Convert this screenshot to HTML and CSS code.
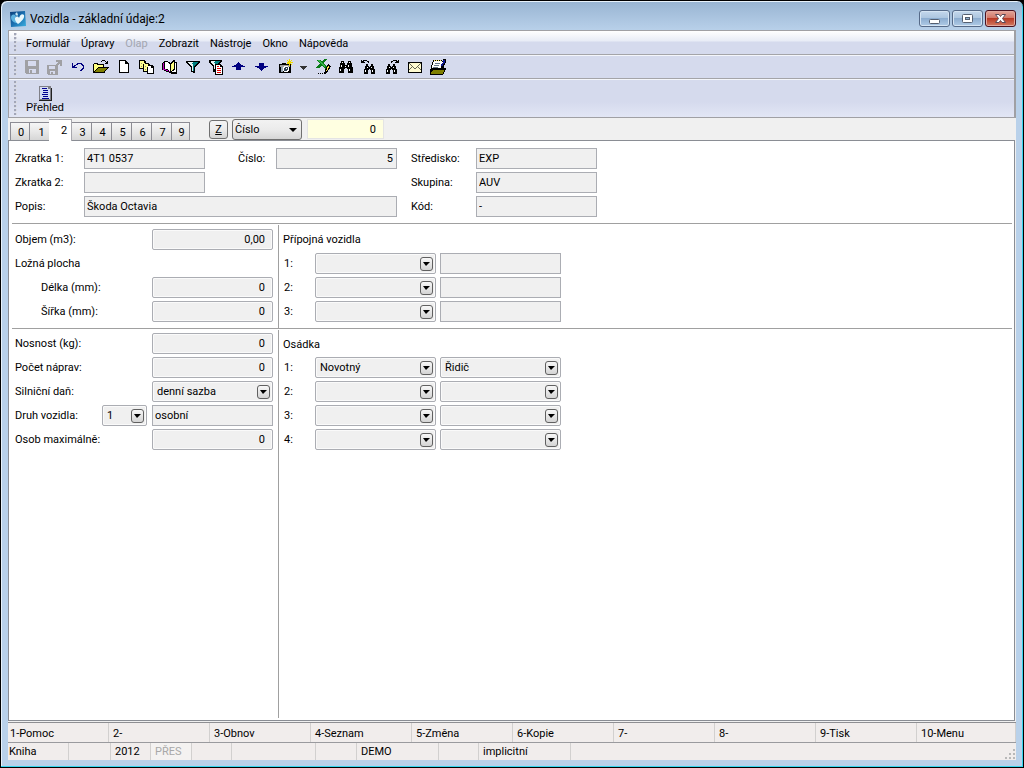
FILE: index.html
```
<!DOCTYPE html>
<html lang="cs">
<head>
<meta charset="utf-8">
<title>Vozidla - základní údaje:2</title>
<link rel="stylesheet" href="styles.css">
</head>
<body>
<div class="window">
  <header class="titlebar">
    <svg class="logo" viewBox="0 0 16 16"><defs><linearGradient id="lg" x1="0" y1="0" x2="1" y2="1"><stop offset="0" stop-color="#0b3d78"/><stop offset="0.500" stop-color="#1a6fb0"/><stop offset="1" stop-color="#3bb0e0"/></linearGradient></defs><path d="M0 1L15 0L16 15L1 16Z" fill="url(#lg)"/><path d="M1 6C2 3 4 3 6 5C5 7 6 10 8 12C4 12 1 10 1 6Z" fill="#5fb4e0"/><path d="M8 13C5 10 4 7 6 6C7 5 9 6 9 7C10 4 12 2 14 4C15 7 11 11 8 13Z" fill="#e9f8fd"/><path d="M5 3L7 1L8 4L7 5Z" fill="#c8e6f4"/></svg>
    <h1 class="title">Vozidla - základní údaje:2</h1>
    <div class="winbtns">
      <button class="winbtn" aria-label="Minimalizovat"><svg width="13" height="11" viewBox="0 0 13 11"><rect x="1.500" y="6.500" width="10" height="4" rx="1" fill="#fff" stroke="#555f70"/></svg></button>
      <button class="winbtn" aria-label="Maximalizovat"><svg width="13" height="11" viewBox="0 0 13 11"><rect x="1.500" y="1.500" width="10" height="8" rx="1" fill="#fff" stroke="#555f70"/><rect x="4.500" y="4.500" width="4" height="2" fill="#8fb0d0" stroke="#555f70"/></svg></button>
      <button class="winbtn close" aria-label="Zavřít"><svg width="13" height="11" viewBox="0 0 13 11"><path d="M1.500 1.500H5L6.500 3.500L8 1.500H11.500L8.500 5.500L11.500 9.500H8L6.500 7.500L5 9.500H1.500L4.500 5.500Z" fill="#fff" stroke="#5a4a58"/></svg></button>
    </div>
  </header>

  <div class="client">
    <div class="bars">
      <nav class="bar menubar">
        <span class="grip"></span>
        <button>Formulář</button><button>Úpravy</button><button disabled>Olap</button><button>Zobrazit</button><button>Nástroje</button><button>Okno</button><button>Nápověda</button>
      </nav>
      <div class="bar toolbar">
        <span class="grip"></span>
        <button aria-label="Uložit"><svg viewBox="0 0 16 16"><path d="M1 1H15V15H2L1 14Z" fill="#a0a0a4"/><path d="M4 2H12V7H4Z" fill="#d6daee"/><path d="M5 10H12V14H5Z" fill="#d6daee"/><path d="M6 11H8V14H6Z" fill="#a0a0a4"/></svg></button>
        <button aria-label="Uložit jako"><svg viewBox="0 0 16 16"><path d="M0 6H11V16H1L0 15Z" fill="#a0a0a4"/><path d="M2 7H8V10H2ZM3 12H8V15H3Z" fill="#d6daee"/><path d="M4 13H6V15H4ZM9 1H15V7H13V5H12V6H11V7H9V5H10V4H11V3H9Z" fill="#a0a0a4"/></svg></button>
        <button aria-label="Zpět"><svg viewBox="0 0 16 16"><path d="M2 4H3V7H4V6H6V5H7V4H12V5H13V6H14V10H13V11H12V12H10V11H11V10H12V9H13V7H12V6H11V5H8V6H6V7H5V8H7V9H2Z" fill="#000080"/></svg></button>
        <button aria-label="Otevřít"><svg viewBox="0 0 16 16"><path d="M0 5H1V4H5V5H11V8H16V9H15V10H14V11H13V12H12V14H0Z"/><path d="M1 5H4V6H10V8H5V9H4V10H3V11H2V12H1Z" fill="#ffff80"/><path d="M5 9H14V10H13V11H12V12H11V13H2V12H3V11H4V10H5Z" fill="#808000"/><path d="M8 2H9V1H12V2H13V3H14V2H15V5H12V4H13V3H12V2H9V3H8Z"/></svg></button>
        <button aria-label="Nový"><svg viewBox="0 0 16 16"><path d="M3 1H10V2H11V3H12V4H13V14H3Z"/><path d="M4 2H9V5H12V13H4Z" fill="#fff"/></svg></button>
        <button aria-label="Kopie"><svg viewBox="0 0 16 16"><path d="M0 1H6V2H7V4H10V5H11V6H14V7H15V15H8V13H4V10H0Z"/><path d="M1 2H5V4H6V5H4V9H1Z" fill="#ffff90"/><path d="M5 5H9V7H10V8H8V12H5Z" fill="#ffff90"/><path d="M9 7H12V9H14V14H9Z" fill="#fff"/><path d="M2 4H3V5H2ZM2 7H3V8H2ZM6 7H7V8H6ZM6 10H7V11H6Z" fill="#999977"/></svg></button>
        <button aria-label="Kniha"><svg viewBox="0 0 16 16"><path d="M0 4H1V3H2V2H6V3H8V4H9V3H10V2H11V1H13V3H15V15H9V14H7V13H4V12H2V11H0Z"/><path d="M1 4H2V10H4V11H6V12H8V13H7V12H4V11H1Z" fill="#c000c0"/><path d="M3 3H6V4H7V5H8V12H7V11H6V10H3Z" fill="#fff"/><path d="M9 5H10V4H11V3H12V10H11V11H10V12H9Z" fill="#ffff80"/><path d="M13 4H14V13H10V12H12V11H13Z" fill="#fff"/></svg></button>
        <button aria-label="Filtr"><svg viewBox="0 0 16 16"><path d="M1 2H15V4H14V5H13V6H12V7H11V8H10V14H8V13H6V8H5V7H4V6H3V5H2V4H1Z"/><path d="M3 3H13V4H12V5H11V6H10V7H9V12H7V7H6V6H5V5H4V4H3Z" fill="#008080"/><path d="M3 3H8V4H7V5H8V12H7V7H6V6H5V5H4V4H3Z" fill="#e8f4f4"/></svg></button>
        <button aria-label="Filtr seznamu"><svg viewBox="0 0 16 16"><path d="M1 1H14V3H13V4H12V5H11V6H10V13H5V7H4V6H3V5H2V4H1Z"/><path d="M3 2H12V3H11V4H10V5H9V6H8V10H6V6H5V5H4V4H3Z" fill="#008080"/><path d="M3 2H7V3H6V4H7V10H6V6H5V5H4V4H3Z" fill="#e8f4f4"/><path d="M7 5H13V6H14V7H15V16H7Z"/><path d="M8 6H12V8H14V15H8Z" fill="#fff"/><path d="M9 7H11V8H9ZM9 9H13V10H9ZM9 11H13V12H9ZM9 13H13V14H9Z" fill="#e00000"/></svg></button>
        <button aria-label="Předchozí"><svg viewBox="0 0 16 16"><path d="M7 3H8V4H9V5H10V6H12V7H14V8H10V11H5V8H1V7H3V6H5V5H6V4H7Z" fill="#000080"/></svg></button>
        <button aria-label="Další"><svg viewBox="0 0 16 16"><path d="M5 4H10V7H14V8H12V9H10V10H9V11H8V12H7V11H6V10H5V9H3V8H1V7H5Z" fill="#000080"/></svg></button>
        <button aria-label="Snímek"><svg viewBox="0 0 16 16"><path d="M2 5H5V4H9V5H14V14H2Z"/><path d="M3 6H13V8H3Z" fill="#a0a0a0"/><path d="M4 8H6V13H4Z" fill="#98a8b8"/><circle cx="9" cy="10" r="3" fill="#fff"/><circle cx="9" cy="10" r="2" fill="#334455"/><path d="M9 9H10V10H9Z" fill="#fff"/><path d="M9 3H11V2H10V1H11V2H12V0H13V2H14V1H15V2H14V3H16V4H14V5H15V6H14V5H13V7H12V5H10V4H11Z" fill="#f2dc00"/></svg></button>
        <button class="drop" aria-label="Možnosti snímku"><svg viewBox="0 0 16 16"><path d="M4 7H11V8H10V9H9V10H8V11H7V10H6V9H5V8H4Z" fill="#333"/></svg></button>
        <button aria-label="Export do Excelu"><svg viewBox="0 0 16 16"><path d="M1 1H5L7 3L9 0H12L9 4L12 8L10 10L7 7L4 9H1L5 4Z" fill="#087a18"/><path d="M2 1H5L10 7V8H9Z" fill="#35b54a"/><path d="M13 5L16 7L12 14L9 15L10 11Z"/><path d="M13 7L14 8L12 12L11 12Z" fill="#ffe34a"/><path d="M3 14H4V15H3ZM5 14H6V15H5ZM7 14H8V15H7Z"/></svg></button>
        <button aria-label="Hledat"><svg viewBox="0 0 16 16"><path d="M3 2H6V4H7V6H9V4H10V2H13V4H14V8H15V14H10V10H9V9H7V10H6V14H1V8H2V4H3Z"/><path d="M4 3H5V4H4ZM3 6H4V8H3ZM2 10H3V12H2ZM11 3H12V4H11ZM10 6H11V8H10ZM11 10H12V12H11ZM7 7H8V8H7Z" fill="#fff"/></svg></button>
        <button aria-label="Hledat předchozí"><svg viewBox="0 0 16 16"><path d="M5 5H7V7H8V8H9V7H10V5H12V7H13V10H14V15H10V11H9V10H8V11H7V15H3V10H4V7H5Z"/><path d="M4 11H5V13H4ZM11 11H12V13H11ZM6 8H7V9H6ZM10 8H11V9H10Z" fill="#fff"/><path d="M0 1H1V2H2V1H6V2H8V4H7V3H6V2H3V3H4V4H0Z"/></svg></button>
        <button aria-label="Hledat další"><svg viewBox="0 0 16 16"><path d="M4 5H6V7H7V8H8V7H9V5H11V7H12V10H13V15H9V11H8V10H7V11H6V15H2V10H3V7H4Z"/><path d="M3 11H4V13H3ZM10 11H11V13H10ZM5 8H6V9H5ZM9 8H10V9H9Z" fill="#fff"/><path d="M15 1H14V2H13V1H9V2H7V4H8V3H9V2H12V3H11V4H15Z"/></svg></button>
        <button aria-label="E-mail"><svg viewBox="0 0 16 16"><path d="M1 3H15V14H1Z"/><path d="M2 4H14V13H2Z" fill="#fffbd0"/><path d="M2 4H3V5H4V6H5V7H6V8H7V9H9V8H10V7H11V6H12V5H13V4H14V5H13V6H12V7H11V8H12V9H13V10H14V11H13V10H12V9H11V8H10V9H9V10H7V9H6V8H5V9H4V10H3V11H2V10H3V9H4V8H5V7H4V6H3V5H2Z" fill="#666655"/></svg></button>
        <button aria-label="Poznámky"><svg viewBox="0 0 16 16"><path d="M3 1H12V2H13V0H16V4H15V6H14V9H16V11H15V13H14V15H13V16H0V10H1V6H2V3H3Z"/><path d="M4 2H12V3H13V4H12V6H11V9H2V6H3V3H4Z" fill="#fff"/><path d="M5 4H10V5H5ZM4 6H9V7H4ZM3 8H8V9H3Z" fill="#667788"/><path d="M4 1H5V2H4ZM6 1H7V2H6ZM8 1H9V2H8ZM10 1H11V2H10Z" fill="#ffe860"/><path d="M13 1H15V4H14V5H13V7H11V5H12V4H13Z" fill="#101890"/><path d="M3 11H14V13H13V15H1V13H2V12H3Z" fill="#808000"/></svg></button>
      </div>
      <div class="bar overview">
        <span class="grip"></span>
        <button><svg viewBox="0 0 16 16"><path d="M2 1H14V15H2Z" fill="#808088"/><path d="M3 2H11V4H13V14H3Z" fill="#d4dcf4"/><path d="M2 15H14V16H2ZM14 3H15V16H14Z" fill="#222"/><path d="M5 3H10V4H5ZM6 5H11V6H6ZM6 7H11V8H6ZM5 9H11V10H5ZM6 11H11V12H6ZM5 13H12V14H5Z" fill="#000090"/></svg><span>Přehled</span></button>
      </div>
    </div>

    <div class="tabstrip">
      <div class="tabs" role="tablist">
        <button role="tab">0</button><button role="tab">1</button><button role="tab" class="active" aria-selected="true">2</button><button role="tab">3</button><button role="tab">4</button><button role="tab">5</button><button role="tab">6</button><button role="tab">7</button><button role="tab">9</button>
      </div>
      <button class="zbtn"><u>Z</u></button>
      <span class="finder"><select aria-label="Hledat podle"><option>Číslo</option></select></span>
      <input class="search" aria-label="Hledaná hodnota" value="0">
    </div>

    <main class="page">
      <section class="ident">
        <label for="z1">Zkratka 1:</label><input id="z1" value="4T1 0537" readonly>
        <label class="mid" for="cis">Číslo:</label><input id="cis" class="num" value="5" readonly>
        <label for="str">Středisko:</label><input id="str" value="EXP" readonly>
        <label for="z2">Zkratka 2:</label><input id="z2" readonly>
        <label class="third" for="sku">Skupina:</label><input id="sku" value="AUV" readonly>
        <label for="pop">Popis:</label><input id="pop" class="wide" value="Škoda Octavia" readonly>
        <label for="kod">Kód:</label><input id="kod" value="-" readonly>
      </section>

      <div class="split">
        <section class="left">
          <div class="row"><label for="obj">Objem (m3):</label><input id="obj" class="num soft" value="0,00"></div>
          <div class="row"><span>Ložná plocha</span></div>
          <div class="row"><label class="sub" for="del">Délka (mm):</label><input id="del" class="num soft" value="0"></div>
          <div class="row"><label class="sub" for="sir">Šířka (mm):</label><input id="sir" class="num soft" value="0"></div>
        </section>
        <section class="right">
          <h2>Přípojná vozidla</h2>
          <div class="row"><label for="p1">1:</label><span class="combo"><select id="p1"><option></option></select></span><input aria-label="Vozidlo 1" readonly></div>
          <div class="row"><label for="p2">2:</label><span class="combo"><select id="p2"><option></option></select></span><input aria-label="Vozidlo 2" readonly></div>
          <div class="row"><label for="p3">3:</label><span class="combo"><select id="p3"><option></option></select></span><input aria-label="Vozidlo 3" readonly></div>
        </section>
      </div>

      <div class="split last">
        <section class="left">
          <div class="row"><label for="nos">Nosnost (kg):</label><input id="nos" class="num soft" value="0"></div>
          <div class="row"><label for="nap">Počet náprav:</label><input id="nap" class="num soft" value="0"></div>
          <div class="row"><label for="dan">Silniční daň:</label><span class="combo"><select id="dan"><option>denní sazba</option></select></span></div>
          <div class="row"><label for="dru">Druh vozidla:</label><span class="combo small"><select id="dru"><option>1</option></select></span><input aria-label="Název druhu" value="osobní" readonly></div>
          <div class="row"><label for="oso">Osob maximálně:</label><input id="oso" class="num soft" value="0"></div>
        </section>
        <section class="right">
          <h2>Osádka</h2>
          <div class="row"><label for="o1">1:</label><span class="combo"><select id="o1"><option>Novotný</option></select></span><span class="combo"><select aria-label="Funkce 1"><option>Řidič</option></select></span></div>
          <div class="row"><label for="o2">2:</label><span class="combo"><select id="o2"><option></option></select></span><span class="combo"><select aria-label="Funkce 2"><option></option></select></span></div>
          <div class="row"><label for="o3">3:</label><span class="combo"><select id="o3"><option></option></select></span><span class="combo"><select aria-label="Funkce 3"><option></option></select></span></div>
          <div class="row"><label for="o4">4:</label><span class="combo"><select id="o4"><option></option></select></span><span class="combo"><select aria-label="Funkce 4"><option></option></select></span></div>
        </section>
      </div>
    </main>

    <div class="keys">
      <button>1-Pomoc</button><button>2-</button><button>3-Obnov</button><button>4-Seznam</button><button>5-Změna</button><button>6-Kopie</button><button>7-</button><button>8-</button><button>9-Tisk</button><button>10-Menu</button>
    </div>
    <footer class="status">
      <span>Kniha</span><span></span><span>2012</span><span class="off">PŘES</span><span></span><span></span><span></span><span>DEMO</span><span></span><span>implicitní</span><span class="end"><svg width="11" height="11" viewBox="0 0 11 11"><path d="M8 0H10V2H8ZM8 4H10V6H8ZM4 4H6V6H4ZM8 8H10V10H8ZM4 8H6V10H4ZM0 8H2V10H0Z" fill="#b8b8b8"/></svg></span>
    </footer>
  </div>
</div>
</body>
</html>
```
FILE: styles.css
```
*, *::before, *::after { box-sizing: border-box; }
body {
  margin: 0;
  font: 11px/14px Roboto, "DejaVu Sans Condensed", sans-serif;
  color: #000;
  background: #000;
}
button, input, select { font: inherit; color: inherit; margin: 0; padding: 0; border-radius: 0; }
button { background: none; border: 0; }
h1, h2 { margin: 0; font: inherit; }
svg { display: block; shape-rendering: crispEdges; }

.window {
  min-height: 100vh;
  display: flex;
  flex-direction: column;
  padding: 0 6px 7px;
  border: 1px solid #000;
  border-radius: 7px 7px 0 0;
  background: linear-gradient(#98b4d2, #b9d1ea 30px, #b9d1ea);
  box-shadow: inset -1px -1px #35d5ee, inset 1px 1px #e8f2fb;
}

.titlebar {
  height: 29px;
  display: flex;
  align-items: center;
  padding: 6px 1px 0 3px;
  gap: 4px;
}
.logo { width: 16px; height: 16px; shape-rendering: auto; }
.title { flex: 1; font-size: 12px; line-height: 16px; }
.winbtns { display: flex; gap: 2px; }
.winbtn {
  width: 31px;
  height: 17px;
  display: flex;
  align-items: center;
  justify-content: center;
  border: 1px solid #566a88;
  border-radius: 3px;
  background: linear-gradient(#c5d8ec, #adc6e0 45%, #8dadd0 50%, #b0cbe6);
  box-shadow: inset 0 0 0 1px #d5e4f3;
}
.winbtn svg { shape-rendering: auto; }
.winbtn.close {
  border-color: #4b1220;
  background: linear-gradient(#e3a599, #d3796a 45%, #b93a26 50%, #d37b62);
  box-shadow: inset 0 0 0 1px #e2a99f;
}

.client {
  flex: 1;
  display: flex;
  flex-direction: column;
  background: #f0f0f0;
  margin: 0 1px;
}

.bars { border: 1px solid #a0a0a4; border-right-width: 2px; background: #d5daed; }
.bar { display: flex; align-items: center; padding-left: 5px; border-bottom: 1px solid #a4a4a8; }
.grip {
  width: 3px;
  align-self: stretch;
  margin: 2px 0;
  background: radial-gradient(circle at 1px 1px, #a2a6b8 1px, #fff 2px, transparent 2px) 0 0 / 3px 4px;
}
.menubar { height: 24px; background: linear-gradient(#fff, #e8ecf6 10px, #d5daed 11px); }
.menubar button { margin-left: 11px; padding-top: 3px; }
.menubar .grip + button { margin-left: 9px; }
.menubar button:disabled { color: #a3a6b0; }
.toolbar { height: 24px; box-shadow: inset 0 1px #f4f6fb; }
.toolbar button { width: 23px; height: 22px; padding: 0 3px 0 4px; }
.toolbar .grip + button { margin-left: 3px; }
.toolbar svg { width: 16px; height: 16px; }
.toolbar .drop { width: 15px; padding: 0; }
.overview {
  height: 38px;
  border-bottom: 0;
  background: linear-gradient(#d5daed 60%, #e2e6f5);
  box-shadow: inset 0 1px #f4f6fb;
}
.overview button {
  display: flex;
  flex-direction: column;
  align-items: center;
  margin: 2px 0 0 9px;
  font: 11px/12px "Liberation Sans", Arial, sans-serif;
}
.overview svg { width: 16px; height: 16px; }

.tabstrip { height: 22px; display: flex; align-items: flex-start; padding: 1px 0 0 2px; background: #f0f0f0; }
.tabs { display: flex; align-items: flex-end; width: 199px; height: 21px; }
.tabs button {
  width: 20px;
  height: 18px;
  padding: 2px 0 0 2px;
  border: 1px solid #8c8c94;
  border-width: 1px 1px 0 0;
  background: linear-gradient(#f6f6f6, #e8e8e8 50%, #d6d6d6);
}
.tabs button:first-child { border-left-width: 1px; }
.tabs button:nth-child(2) { width: 19px; border-right: 0; padding-left: 4px; }
.tabs button:last-child { width: 18px; }
.tabs .active {
  width: 23px;
  height: 22px;
  margin-bottom: -1px;
  padding: 0 0 0 8px;
  background: #fff;
  border-color: #a8a8ae;
  z-index: 1;
}
.zbtn {
  width: 19px;
  height: 19px;
  margin: 1px 4px 0 0;
  border: 1px solid #707070;
  border-radius: 3px;
  background: linear-gradient(#f4f4f4, #ebebeb 50%, #d4d4d4);
}
.finder { position: relative; width: 70px; height: 21px; margin-right: 5px; }
.finder select {
  appearance: none;
  width: 100%;
  height: 100%;
  padding-left: 2px;
  border: 1px solid #707070;
  border-radius: 3px;
  background: linear-gradient(#f2f2f2, #ebebeb 50%, #d6d6d6);
}
.finder::after {
  content: "";
  position: absolute;
  right: 5px;
  top: 9px;
  border: 4px solid transparent;
  border-top-color: #000;
  border-bottom: 0;
  pointer-events: none;
}
.search {
  width: 77px;
  height: 20px;
  padding: 0 7px;
  text-align: right;
  border: 1px solid #e4e4e4;
  background: #ffffe1;
}

.page {
  flex: 1;
  display: flex;
  flex-direction: column;
  padding: 0 2px 2px 3px;
  border: 1px solid #8a8d94;
  margin-right: 1px;
  background: #fff;
}
.page input {
  width: 121px;
  height: 21px;
  padding: 0 2px;
  border: 1px solid #abadb3;
  background: #f0f0f0;
}
.page .num { text-align: right; padding-right: 3px; }
.page .soft { border-radius: 2px; padding-right: 7px; box-shadow: inset 0 0 0 1px #fafafa; }
.ident {
  display: grid;
  grid-template-columns: 69px 121px 71px 121px 79px 121px;
  row-gap: 3px;
  align-items: center;
  padding: 7px 0 6px 3px;
  border-bottom: 1px solid #a0a0a0;
}
.ident .mid { padding-left: 33px; }
.ident #cis + label, .ident .third, .ident #pop + label { padding-left: 14px; }
.ident .third { grid-column: 5; }
.ident .wide { grid-column: 2 / 5; width: 100%; }

.split { display: flex; padding-top: 1px; border-bottom: 1px solid #a0a0a0; }
.split.last { flex: 1; border-bottom: 0; }
.left { width: 267px; padding: 4px 5px 6px 3px; border-right: 1px solid #a0a0a0; }
.right { padding: 4px 0 6px 4px; }
.split.last .left, .split.last .right { padding-top: 3px; }
.row { display: flex; align-items: center; height: 21px; }
.row + .row, h2 + .row { margin-top: 3px; }
.row > label, .row > span:only-child { flex: 1; }
.row .sub { padding-left: 26px; }
.right h2 { height: 21px; line-height: 21px; }
.split.last h2 { line-height: 23px; }
.right .row > label { flex: none; width: 32px; padding-left: 1px; }
.right .row > label + * { margin-right: 4px; }

.combo { position: relative; width: 121px; height: 21px; }
.combo.small { width: 45px; margin-right: 5px; }
.combo select {
  appearance: none;
  width: 100%;
  height: 100%;
  padding: 0 20px 0 4px;
  border: 1px solid #abadb3;
  border-radius: 2px;
  background: #f0f0f0;
  box-shadow: inset 0 0 0 1px #fafafa;
}
.combo::before {
  content: "";
  position: absolute;
  right: 3px;
  top: 4px;
  width: 13px;
  height: 14px;
  border: 1px solid #606060;
  border-radius: 3px;
  background: linear-gradient(#f8f8f8, #d4d4d4);
  pointer-events: none;
}
.combo::after {
  content: "";
  position: absolute;
  right: 6px;
  top: 9px;
  border: 4px solid transparent;
  border-width: 4px 4px 0 3px;
  border-top-color: #000;
  pointer-events: none;
}

.keys { display: flex; margin-top: 1px; border-top: 1px solid #8e8e92; background: #f1edec; }
.keys button { flex: 0 1 101px; height: 19px; padding: 2px 0 0 4px; text-align: left; border-right: 1px solid #d2d0cf; }
.keys button:first-child { padding-left: 2px; }
.keys button:last-child { flex: 1; }
.status {
  display: grid;
  grid-template-columns: 61px 42px 40px 41px 40px 84px 41px 82px 40px 92px 1fr;
  height: 18px;
  border-top: 1px solid #9a9a9e;
  background: #f1edec;
}
.status span { padding: 2px 0 0 4px; border-right: 1px solid #d2d0cf; }
.status span:first-child { padding-left: 1px; }
.status .off { color: #a8a8a8; background: #f4f2f1; }
.status .end { display: flex; justify-content: flex-end; align-items: flex-end; border: 0; }
```
